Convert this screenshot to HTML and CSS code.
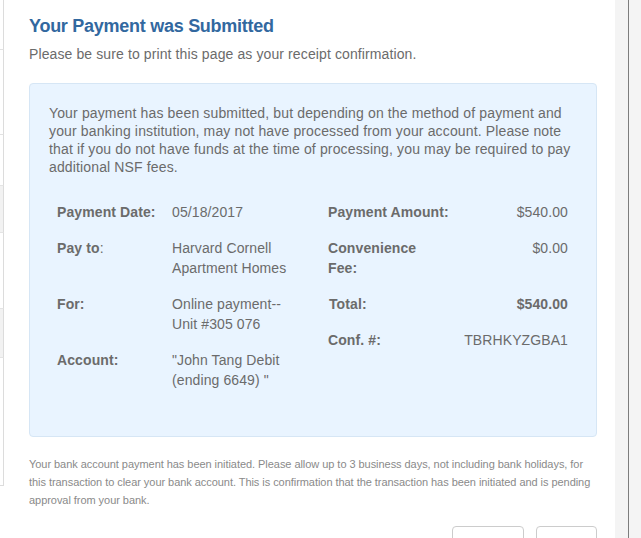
FILE: index.html
```html
<!DOCTYPE html>
<html>
<head>
<meta charset="utf-8">
<link rel="stylesheet" href="styles.css">
</head>
<body>
<div class="page">
  <div class="backdrop-left">
    <div class="seg s1"></div>
    <div class="seg s2"></div>
    <div class="seg s3"></div>
    <div class="seg box s4"></div>
    <div class="seg s5"></div>
    <div class="seg box s6"></div>
    <div class="seg s7"></div>
  </div>
  <div class="modal">
    <h1 class="title">Your Payment was Submitted</h1>
    <p class="subtitle">Please be sure to print this page as your receipt confirmation.</p>
    <div class="info-box">
      <p class="notice">Your payment has been submitted, but depending on the method of payment and your banking institution, may not have processed from your account. Please note that if you do not have funds at the time of processing, you may be required to pay additional NSF fees.</p>
      <div class="details">
        <div class="col col-left">
          <div class="row"><div class="label">Payment Date:</div><div class="value">05/18/2017</div></div>
          <div class="row"><div class="label">Pay to<span class="plain">:</span></div><div class="value">Harvard Cornell Apartment Homes</div></div>
          <div class="row"><div class="label">For:</div><div class="value">Online payment--<br>Unit #305 076</div></div>
          <div class="row"><div class="label">Account:</div><div class="value">"John Tang Debit (ending 6649) "</div></div>
        </div>
        <div class="col col-right">
          <div class="row"><div class="label">Payment Amount:</div><div class="value">$540.00</div></div>
          <div class="row"><div class="label">Convenience<br>Fee:</div><div class="value">$0.00</div></div>
          <div class="row"><div class="label total">Total:</div><div class="value strong">$540.00</div></div>
          <div class="row"><div class="label">Conf. #:</div><div class="value">TBRHKYZGBA1</div></div>
        </div>
      </div>
    </div>
    <p class="footnote">Your bank account payment has been initiated. Please allow up to 3 business days, not including bank holidays, for this transaction to clear your bank account. This is confirmation that the transaction has been initiated and is pending approval from your bank.</p>
    <div class="actions">
      <button class="btn btn-a" type="button"></button>
      <button class="btn btn-b" type="button"></button>
    </div>
  </div>
  <div class="backdrop-right"><div class="rule"></div></div>
</div>
</body>
</html>
```

FILE: styles.css
```css
* { box-sizing: border-box; }
html, body { margin: 0; padding: 0; background: #fff; }
body {
  font-family: "Liberation Sans", Arial, sans-serif;
  color: #666;
}
.page {
  display: flex;
  width: 641px;
  height: 538px;
  overflow: hidden;
}
.backdrop-left {
  width: 4px;
  flex: none;
  display: flex;
  flex-direction: column;
}
.seg {
  width: 4px;
  border-right: 1px solid #dcdcdc;
}
.s1 { height: 50px; border-bottom: 1px solid #e2e2e2; }
.s2 { height: 85px; border-bottom: 1px solid #e2e2e2; }
.s3 { height: 50px; }
.box { background: #f2f2f2; border-top: 1px solid #e4e4e4; border-bottom: 1px solid #e4e4e4; }
.s4 { height: 48px; }
.s5 { height: 75px; }
.s6 { height: 50px; }
.s7 { height: 128px; border-bottom: 1px solid #dcdcdc; }

.modal {
  flex: 1;
  background: #fff;
  padding: 16px 18px 0 25px;
}
.title {
  margin: 0;
  font-size: 18px;
  line-height: 20px;
  font-weight: bold;
  color: #32689f;
  letter-spacing: -0.27px;
}
.subtitle {
  margin: 8px 0 0;
  font-size: 14px;
  line-height: 20px;
  color: #6b6b6b;
  letter-spacing: 0.11px;
}
.info-box {
  margin-top: 19px;
  background: #e9f4ff;
  border: 1px solid #d6e6f5;
  border-radius: 4px;
  padding: 20px 19px 30px;
}
.notice {
  margin: 0;
  font-size: 14px;
  line-height: 18px;
  color: #6b6b6b;
  letter-spacing: 0.14px;
}
.details {
  margin: 26px 9px 0 8px;
  display: grid;
  grid-template-columns: 255px 240px;
  column-gap: 16px;
  font-size: 14px;
  line-height: 20px;
  letter-spacing: 0.1px;
}
.col { display: flex; flex-direction: column; }
.row { display: flex; margin-bottom: 16px; }
.label { font-weight: bold; color: #6b6b6b; }
.plain { font-weight: normal; }
.value { color: #6b6b6b; }
.col-left .label { width: 115px; flex: none; }
.col-left .value { width: 125px; }
.col-right .label { flex: 1; white-space: nowrap; }
.col-right .label.total { padding-left: 1px; }
.col-right .value { text-align: right; }
.value.strong { font-weight: bold; }

.footnote {
  margin: 18px 0 0;
  font-size: 11px;
  line-height: 18px;
  color: #8a8a8a;
  letter-spacing: -0.05px;
}
.actions {
  margin-top: 17px;
  display: flex;
  justify-content: flex-end;
  gap: 12px;
}
.btn {
  height: 34px;
  background: #fff;
  border: 1px solid #cccccc;
  border-radius: 4px;
  padding: 0;
}
.btn-a { width: 72px; }
.btn-b { width: 61px; }

.backdrop-right {
  width: 26px;
  flex: none;
  background: #f4f4f4;
  padding-left: 13px;
}
.rule {
  width: 1px;
  height: 100%;
  background: #7d7d7d;
}
```
